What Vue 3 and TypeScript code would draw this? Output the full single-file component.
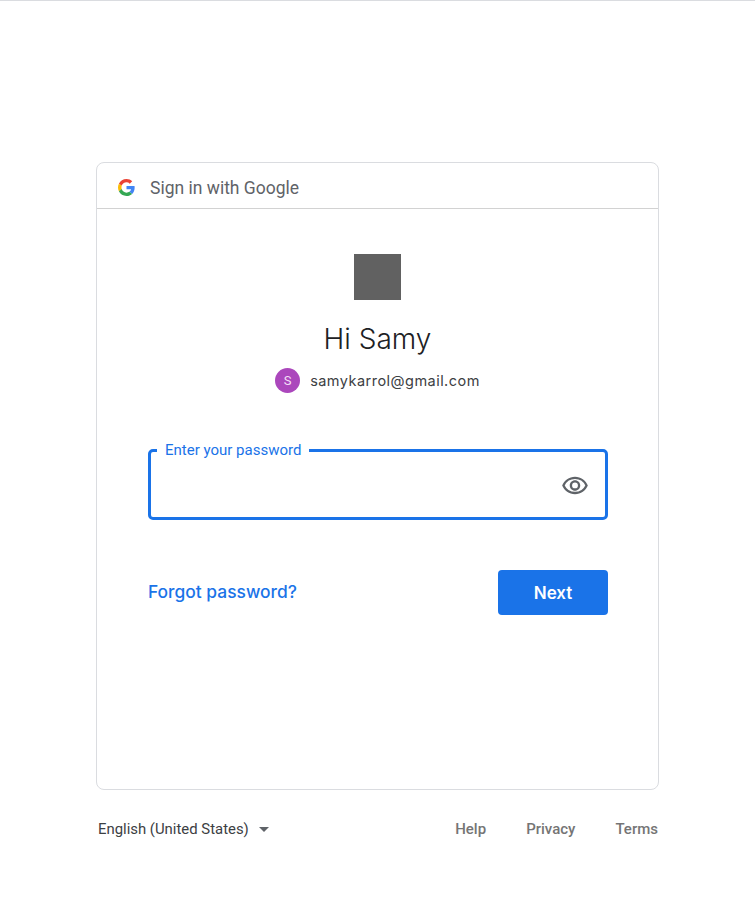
<script setup lang="ts">
const footerLinks = ['Help', 'Privacy', 'Terms']
</script>

<template>
  <div class="page">
    <main class="card">
      <header class="card__header">
        <svg class="g-logo" width="17" height="17" viewBox="0 0 48 48" aria-hidden="true">
          <path fill="#EA4335" d="M24 9.5c3.54 0 6.71 1.22 9.21 3.6l6.85-6.85C35.9 2.38 30.47 0 24 0 14.62 0 6.51 5.38 2.56 13.22l7.98 6.19C12.43 13.72 17.74 9.5 24 9.5z" />
          <path fill="#4285F4" d="M46.98 24.55c0-1.57-.15-3.09-.38-4.55H24v9.02h12.94c-.58 2.96-2.26 5.48-4.78 7.18l7.73 6c4.51-4.18 7.09-10.36 7.09-17.65z" />
          <path fill="#FBBC05" d="M10.53 28.59c-.48-1.45-.76-2.99-.76-4.59s.27-3.14.76-4.59l-7.98-6.19C.92 16.46 0 20.12 0 24c0 3.88.92 7.54 2.56 10.78l7.97-6.19z" />
          <path fill="#34A853" d="M24 48c6.48 0 11.93-2.13 15.89-5.81l-7.73-6c-2.15 1.45-4.92 2.3-8.16 2.3-6.26 0-11.57-4.22-13.47-9.91l-7.98 6.19C6.51 42.62 14.62 48 24 48z" />
        </svg>
        <span class="card__title">Sign in with Google</span>
      </header>

      <section class="card__body">
        <div class="app-logo" />
        <h1 class="greeting">Hi Samy</h1>
        <div class="account">
          <span class="account__avatar">S</span>
          <span class="account__email">samykarrol@gmail.com</span>
        </div>

        <div class="password">
          <fieldset class="password__box">
            <legend class="password__label">Enter your password</legend>
            <svg class="password__eye" width="28" height="28" viewBox="0 0 24 24" aria-hidden="true">
              <path fill="#5f6368" d="M12 6a9.77 9.77 0 0 1 8.82 5.5A9.77 9.77 0 0 1 12 17a9.77 9.77 0 0 1-8.82-5.5A9.77 9.77 0 0 1 12 6m0-2C7 4 2.73 7.11 1 11.5 2.73 15.89 7 19 12 19s9.27-3.11 11-7.5C21.27 7.11 17 4 12 4zm0 5a2.5 2.5 0 0 1 0 5 2.5 2.5 0 0 1 0-5m0-2c-2.48 0-4.5 2.02-4.5 4.5S9.52 16 12 16s4.5-2.02 4.5-4.5S14.48 7 12 7z" />
            </svg>
          </fieldset>
        </div>

        <div class="actions">
          <a class="actions__forgot">Forgot password?</a>
          <button class="actions__next" type="button">Next</button>
        </div>
      </section>
    </main>

    <footer class="footer">
      <div class="footer__lang">
        <span>English (United States)</span>
        <span class="footer__caret" />
      </div>
      <nav class="footer__links">
        <a v-for="link in footerLinks" :key="link">{{ link }}</a>
      </nav>
    </footer>
  </div>
</template>

<style>
html,
body {
  background: #fff;
}
</style>

<style scoped>
.page {
  box-sizing: border-box;
  width: 755px;
  height: 911px;
  padding: 161px 96px 0;
  border-top: 1px solid #dadce0;
  font-family: Roboto, "Liberation Sans", sans-serif;
  overflow: hidden;
}

.card {
  box-sizing: border-box;
  width: 563px;
  height: 628px;
  border: 1px solid #dadce0;
  border-radius: 8px;
}

.card__header {
  display: flex;
  align-items: center;
  gap: 15px;
  height: 41px;
  padding-left: 21px;
  padding-top: 4px;
  border-bottom: 1px solid #d2d2d2;
}

.card__title {
  font-size: 17.5px;
  color: #5f6368;
}

.card__body {
  display: flex;
  flex-direction: column;
  align-items: center;
  padding-top: 45px;
}

.app-logo {
  width: 47px;
  height: 46px;
  background: #616161;
}

.greeting {
  margin: 21px 0 0;
  font-family: Inter, sans-serif;
  font-size: 28px;
  line-height: 36px;
  font-weight: 300;
  color: #202124;
}

.account {
  display: flex;
  align-items: center;
  gap: 10px;
  height: 25px;
  margin-top: 11px;
}

.account__avatar {
  display: grid;
  place-items: center;
  width: 25px;
  height: 25px;
  border-radius: 50%;
  background: #ab47bc;
  color: #f3dff6;
  font-size: 13px;
}

.account__email {
  font-family: Inter, sans-serif;
  font-size: 14.5px;
  line-height: 20px;
  letter-spacing: 0.47px;
  color: #3c4043;
}

.password {
  align-self: stretch;
  margin: 49px 50px 0 51px;
}

.password__box {
  box-sizing: border-box;
  display: flex;
  justify-content: flex-end;
  align-items: center;
  height: 78px;
  margin: 0;
  padding: 0 16px 5px 0;
  border: 3px solid #1a73e8;
  border-radius: 5px;
}

.password__label {
  margin-left: 6px;
  padding: 0 8px;
  font-size: 15px;
  line-height: 17px;
  color: #1a73e8;
}

.password__eye {
  flex-shrink: 0;
  margin-left: auto;
}

.actions {
  align-self: stretch;
  display: flex;
  justify-content: space-between;
  align-items: center;
  margin: 50px 50px 0 51px;
}

.actions__forgot {
  margin-bottom: 2px;
  font-family: Inter, sans-serif;
  font-size: 17.4px;
  font-weight: 550;
  color: #1a73e8;
  cursor: pointer;
}

.actions__next {
  width: 110px;
  height: 45px;
  border: 0;
  border-radius: 4px;
  background: #1a73e8;
  color: #fff;
  font-family: Inter, sans-serif;
  font-size: 17px;
  font-weight: 600;
  cursor: pointer;
}

.footer {
  display: flex;
  justify-content: space-between;
  align-items: center;
  height: 20px;
  margin-top: 29px;
}

.footer__lang {
  display: flex;
  align-items: center;
  gap: 10px;
  padding-left: 2px;
  font-size: 14.9px;
  color: #3c4043;
}

.footer__caret {
  width: 0;
  height: 0;
  border-left: 5px solid transparent;
  border-right: 5px solid transparent;
  border-top: 5px solid #5f6368;
}

.footer__links {
  display: flex;
  gap: 40px;
  padding-right: 1px;
  font-size: 15px;
  font-weight: 500;
  color: #757575;
}
</style>
